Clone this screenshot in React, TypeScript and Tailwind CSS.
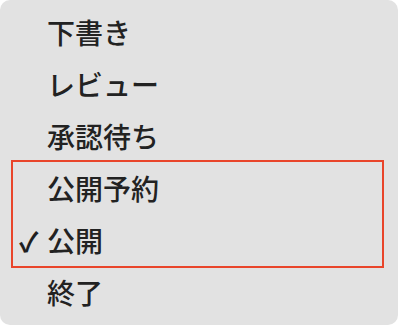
export default function App() {
  const before = ["下書き", "レビュー", "承認待ち"];

  const Row = ({ label, checked }: { label: string; checked?: boolean }) => (
    <div className="h-[52px] flex items-center relative">
      {checked && (
        <span className="absolute left-[19px] text-[27px] leading-none text-[#1f1f1f] font-bold">✓</span>
      )}
      <span className="pl-[47px] text-[28px] leading-none font-medium text-[#222222]">{label}</span>
    </div>
  );

  return (
    <div className="w-[398px] h-[325px] bg-white">
      <div
        className="w-full h-full bg-[#e2e2e2] rounded-[10px] pt-[6px]"
        style={{ fontFamily: '"Noto Sans CJK JP", "Noto Sans", sans-serif' }}
      >
        {before.map((l) => (
          <Row key={l} label={l} />
        ))}
        {/* 選択範囲 */}
        <div className="ml-[11px] mr-[14px] -my-[2px] border-2 border-[#e9452b]">
          <div className="-ml-[13px]">
            <Row label="公開予約" />
            <Row label="公開" checked />
          </div>
        </div>
        <Row label="終了" />
      </div>
    </div>
  );
}
